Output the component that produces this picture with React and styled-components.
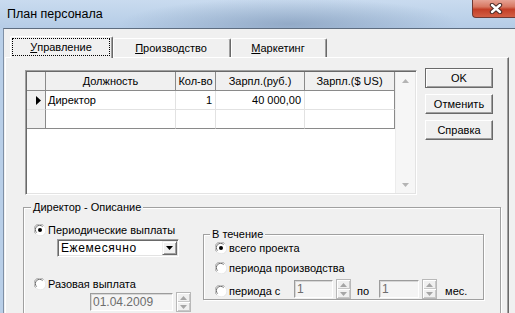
import React from 'react';
import styled, { createGlobalStyle } from 'styled-components';

const tabs = [
	{ key: 'mgmt', first: 'У', rest: 'правление', width: 103, active: true },
	{ key: 'prod', first: 'П', rest: 'роизводство', width: 118 },
	{ key: 'mkt', first: 'М', rest: 'аркетинг', width: 96 },
];

const columns = [
	{ key: 'ind', width: 19, title: '' },
	{ key: 'pos', width: 130, title: 'Должность', align: 'left' },
	{ key: 'qty', width: 40, title: 'Кол-во', align: 'right' },
	{ key: 'rub', width: 89, title: 'Зарпл.(руб.)', align: 'right' },
	{ key: 'usd', width: 90, title: 'Зарпл.($ US)', align: 'right' },
];

const rows = [
	{ pos: 'Директор', qty: '1', rub: '40 000,00', usd: '', current: true },
	{ pos: '', qty: '', rub: '', usd: '' },
];

const RadioGlyph = ({ checked }) => (
	<svg width='12' height='12' viewBox='0 0 12 12'>
		<circle cx='6' cy='6' r='5.5' fill='#fff' />
		<path d='M1.6 9.6 A5.2 5.2 0 0 1 9.6 1.6' stroke='#a0a0a0' fill='none' />
		<path d='M2.6 8.6 A4.1 4.1 0 0 1 8.6 2.6' stroke='#6e6e6e' fill='none' />
		<path d='M2.4 10.4 A5.2 5.2 0 0 0 10.4 2.4' stroke='#e6e6e6' fill='none' />
		{checked && <circle cx='6' cy='6' r='2' fill='#000' />}
	</svg>
);

const Arrow = ({ dir, color }) => (
	<svg width='7' height='4' viewBox='0 0 7 4'>
		{dir === 'up' ? <path d='M0 4 L3.5 0 L7 4 Z' fill={color} /> : <path d='M0 0 L7 0 L3.5 4 Z' fill={color} />}
	</svg>
);

const Spin = () => (
	<Spinner>
		<SpinHalf>
			<Arrow dir='up' color='#a6a6a6' />
		</SpinHalf>
		<SpinHalf>
			<Arrow dir='down' color='#a6a6a6' />
		</SpinHalf>
	</Spinner>
);

const App = () => {
	return (
		<>
			<GlobalStyle />
			<Window>
				<TitleBar>
					<Title>План персонала</Title>
					<CloseButton>
						<svg width='14' height='11' viewBox='0 0 14 11'>
							<path d='M3 2 L11 9 M11 2 L3 9' stroke='#4b2b27' strokeWidth='4.4' strokeLinecap='round' />
							<path d='M3 2 L11 9 M11 2 L3 9' stroke='#fff' strokeWidth='2.4' strokeLinecap='round' />
						</svg>
					</CloseButton>
				</TitleBar>
				<Client>
					<TabList>
						{tabs.map((tab) => (
							<Tab key={tab.key} $active={tab.active} style={{ width: tab.width }}>
								<TabLabel $active={tab.active}>
									<u>{tab.first}</u>
									{tab.rest}
								</TabLabel>
							</Tab>
						))}
					</TabList>
					<Page>
						<TopRow>
							<Grid>
								<Table>
									<Row>
										{columns.map((col) => (
											<HeadCell key={col.key} $w={col.width}>
												{col.title}
											</HeadCell>
										))}
									</Row>
									{rows.map((row, i) => (
										<Row key={i}>
											{columns.map((col) =>
												col.key === 'ind' ? (
													<IndCell key={col.key} $w={col.width} $last={i === rows.length - 1}>
														{row.current && (
															<svg width='5' height='9' viewBox='0 0 5 9'>
																<path d='M0 0 L5 4.5 L0 9 Z' fill='#000' />
															</svg>
														)}
													</IndCell>
												) : (
													<Cell
														key={col.key}
														$w={col.width}
														$align={col.align}
														$edge={col.key === 'usd'}
														$last={i === rows.length - 1}
													>
														{row[col.key]}
													</Cell>
												)
											)}
										</Row>
									))}
								</Table>
								<ScrollBar>
									<ScrollArrow>
										<Arrow dir='up' color='#b4b4b4' />
									</ScrollArrow>
									<ScrollArrow>
										<Arrow dir='down' color='#b4b4b4' />
									</ScrollArrow>
								</ScrollBar>
							</Grid>
							<Buttons>
								<Button $default>OK</Button>
								<Button>Отменить</Button>
								<Button>Справка</Button>
							</Buttons>
						</TopRow>
						<GroupBox>
							<Legend>Директор - Описание</Legend>
							<GroupBody>
								<LeftCol>
									<RadioRow>
										<RadioGlyph checked />
										<span>Периодические выплаты</span>
									</RadioRow>
									<Combo>
										<ComboText>Ежемесячно</ComboText>
										<ComboButton>
											<Arrow dir='down' color='#000' />
										</ComboButton>
									</Combo>
									<RadioRow $gap={20}>
										<RadioGlyph />
										<span>Разовая выплата</span>
									</RadioRow>
									<DateRow>
										<Edit $w={83}>01.04.2009</Edit>
										<Spin />
									</DateRow>
								</LeftCol>
								<InnerGroup>
									<Legend $inner>В течение</Legend>
									<InnerBody>
										<RadioRow>
											<RadioGlyph checked />
											<span>всего проекта</span>
										</RadioRow>
										<RadioRow $gap={6}>
											<RadioGlyph />
											<span>периода производства</span>
										</RadioRow>
										<PeriodRow>
											<PeriodLabel>
												<RadioGlyph />
												<span>периода с</span>
											</PeriodLabel>
											<Edit $w={39} $h={18}>1</Edit>
											<Spin />
											<Word $l={6} $r={10}>по</Word>
											<Edit $w={40} $h={18}>1</Edit>
											<Spin />
											<Word $l={8}>мес.</Word>
										</PeriodRow>
									</InnerBody>
								</InnerGroup>
							</GroupBody>
						</GroupBox>
					</Page>
				</Client>
			</Window>
		</>
	);
};

const GlobalStyle = createGlobalStyle`
	html, body {
		margin: 0;
		padding: 0;
		background: #f0f0f0;
	}
	body {
		font-family: "Liberation Sans", Arial, sans-serif;
		font-size: 11px;
		color: #000;
	}
`;

const Window = styled.div`
	width: 515px;
	height: 313px;
	overflow: hidden;
	display: flex;
	flex-direction: column;
	background: #b9cfe8;
`;

const TitleBar = styled.div`
	height: 28px;
	flex-shrink: 0;
	display: flex;
	align-items: flex-start;
	background: radial-gradient(ellipse 170px 26px at 290px 24px, rgba(110, 135, 168, 0.5), rgba(110, 135, 168, 0)),
		linear-gradient(#c9dbef, #b5cce6);
`;

const Title = styled.div`
	padding: 8px 0 0 7px;
	font-size: 12.5px;
	line-height: 13px;
	color: #000;
`;

const CloseButton = styled.div`
	margin-left: auto;
	width: 43px;
	height: 18px;
	box-sizing: border-box;
	display: flex;
	align-items: center;
	justify-content: center;
	padding-left: 4px;
	border-left: 1px solid #6f3a34;
	border-bottom: 1px solid #6f3a34;
	border-radius: 0 0 0 4px;
	background: linear-gradient(#e6a394 0%, #d77761 40%, #c33f27 55%, #d35f45 100%);
`;

const Client = styled.div`
	flex: 1;
	display: flex;
	flex-direction: column;
	margin-left: 3px;
	border-left: 1px solid #7f90a6;
	border-top: 1px solid #5e6d80;
	background: #f0f0f0;
	padding: 7px 0 0 1px;
	min-height: 0;
`;

const TabList = styled.div`
	height: 21px;
	display: flex;
	align-items: flex-end;
	padding-left: 5px;
	position: relative;
	z-index: 1;
`;

const Tab = styled.div`
	box-sizing: border-box;
	height: ${(p) => (p.$active ? 22 : 19)}px;
	margin-bottom: ${(p) => (p.$active ? -1 : 0)}px;
	display: flex;
	background: #f0f0f0;
	border-top: 1px solid #fff;
	border-left: 1px solid #fff;
	border-right: 1px solid #696969;
	border-radius: 2px 2px 0 0;
	box-shadow: inset -1px 0 #a0a0a0;
	padding: ${(p) => (p.$active ? '1px 2px 2px 1px' : '0 2px 0 0')};
`;

const TabLabel = styled.div`
	flex: 1;
	display: flex;
	align-items: center;
	justify-content: center;
	border: 1px dotted ${(p) => (p.$active ? '#000' : 'transparent')};
	line-height: 13px;
	u {
		text-decoration: underline;
		text-underline-offset: 1px;
	}
`;

const Page = styled.div`
	box-sizing: border-box;
	width: 504px;
	flex: 1;
	border-top: 1px solid #fff;
	border-left: 1px solid #fff;
	border-right: 1px solid #696969;
	box-shadow: inset -1px 0 #a0a0a0;
	padding: 12px 7px 0 17px;
`;

const TopRow = styled.div`
	display: flex;
	align-items: flex-start;
	padding-left: 2px;
`;

const Grid = styled.div`
	box-sizing: border-box;
	width: 392px;
	height: 125px;
	display: flex;
	border-top: 1px solid #a0a0a0;
	border-left: 1px solid #a0a0a0;
	border-right: 1px solid #fff;
	border-bottom: 1px solid #fff;
	box-shadow: inset 1px 1px #696969, inset -1px -1px #e3e3e3;
	padding: 1px;
`;

const Table = styled.div`
	width: 368px;
	background: #fff;
	display: flex;
	flex-direction: column;
`;

const Row = styled.div`
	display: flex;
	height: 19px;
`;

const HeadCell = styled.div`
	box-sizing: border-box;
	width: ${(p) => p.$w}px;
	background: #f0f0f0;
	border-right: 1px solid #8a8a8a;
	border-bottom: 1px solid #8a8a8a;
	display: flex;
	align-items: center;
	justify-content: center;
	white-space: nowrap;
	overflow: hidden;
`;

const IndCell = styled.div`
	box-sizing: border-box;
	width: ${(p) => p.$w}px;
	background: #f0f0f0;
	border-right: 1px solid #8a8a8a;
	border-bottom: 1px solid ${(p) => (p.$last ? '#8a8a8a' : '#e2e2e2')};
	display: flex;
	align-items: center;
	padding-left: 9px;
`;

const Cell = styled.div`
	box-sizing: border-box;
	width: ${(p) => p.$w}px;
	border-right: 1px solid ${(p) => (p.$edge ? '#8a8a8a' : '#e2e2e2')};
	border-bottom: 1px solid ${(p) => (p.$last ? '#8a8a8a' : '#e2e2e2')};
	display: flex;
	align-items: center;
	justify-content: ${(p) => (p.$align === 'right' ? 'flex-end' : 'flex-start')};
	padding: 0 3px 0 2px;
	white-space: nowrap;
`;

const ScrollBar = styled.div`
	flex: 1;
	background: #f6f6f6;
	border-left: 1px solid #ececec;
	display: flex;
	flex-direction: column;
	justify-content: space-between;
`;

const ScrollArrow = styled.div`
	height: 17px;
	display: flex;
	align-items: center;
	justify-content: center;
`;

const Buttons = styled.div`
	display: flex;
	flex-direction: column;
	gap: 6px;
	margin: -2px 0 0 8px;
`;

const Button = styled.button`
	box-sizing: border-box;
	width: 68px;
	height: 20px;
	padding: 0;
	font: inherit;
	color: #000;
	background: #f0f0f0;
	border: 1px solid;
	border-color: ${(p) => (p.$default ? '#6a6a6a' : '#fff #696969 #696969 #fff')};
	box-shadow: ${(p) =>
		p.$default ? 'inset 1px 1px #fff, inset -1px -1px #a0a0a0' : 'inset -1px -1px #a0a0a0'};
`;

const GroupBox = styled.fieldset`
	margin: 6px 0 0;
	padding: 0;
	min-width: 0;
	height: 130px;
	border: 1px solid #a0a0a0;
	box-shadow: inset 1px 1px #fff, 1px 1px #fff;
`;

const Legend = styled.legend`
	margin-left: ${(p) => (p.$inner ? 6 : 7)}px;
	padding: 0 2px;
	line-height: 13px;
	background: #f0f0f0;
`;

const GroupBody = styled.div`
	display: flex;
	align-items: flex-start;
	padding: 9px 0 0 10px;
`;

const LeftCol = styled.div`
	width: 169px;
	display: flex;
	flex-direction: column;
`;

const RadioRow = styled.div`
	display: flex;
	align-items: center;
	gap: 2px;
	height: 14px;
	margin-top: ${(p) => p.$gap || 0}px;
	white-space: nowrap;
`;

const Combo = styled.div`
	box-sizing: border-box;
	width: 122px;
	height: 18px;
	margin: 2px 0 0 23px;
	display: flex;
	background: #fff;
	border-top: 1px solid #a0a0a0;
	border-left: 1px solid #a0a0a0;
	border-right: 1px solid #fff;
	border-bottom: 1px solid #fff;
	box-shadow: inset 1px 1px #696969, inset -1px -1px #e3e3e3;
	padding: 1px;
`;

const ComboText = styled.div`
	flex: 1;
	display: flex;
	align-items: center;
	padding-left: 2px;
	font-size: 12px;
	letter-spacing: 0.6px;
`;

const ComboButton = styled.div`
	box-sizing: border-box;
	width: 15px;
	display: flex;
	align-items: center;
	justify-content: center;
	background: #f0f0f0;
	border: 1px solid;
	border-color: #f0f0f0 #696969 #696969 #f0f0f0;
	box-shadow: inset 1px 1px #fff, inset -1px -1px #a0a0a0;
`;

const DateRow = styled.div`
	display: flex;
	align-items: center;
	margin: 1px 0 0 56px;
`;

const Edit = styled.div`
	box-sizing: border-box;
	width: ${(p) => p.$w}px;
	height: ${(p) => p.$h || 18}px;
	display: flex;
	align-items: center;
	padding-left: 2px;
	font-size: 12px;
	color: #6d6d6d;
	background: #f4f4f4;
	border-top: 1px solid #9c9c9c;
	border-left: 1px solid #9c9c9c;
	border-right: 1px solid #fff;
	border-bottom: 1px solid #fff;
	box-shadow: inset 1px 1px #d6d6d6;
`;

const Spinner = styled.div`
	box-sizing: border-box;
	width: 15px;
	height: 20px;
	margin-left: 3px;
	display: flex;
	flex-direction: column;
	border: 1px solid #b8b8b8;
`;

const SpinHalf = styled.div`
	flex: 1;
	display: flex;
	align-items: center;
	justify-content: center;
	background: #f0f0f0;
	box-shadow: inset 1px 1px #fff, inset -1px -1px #c8c8c8;
`;

const InnerGroup = styled.fieldset`
	box-sizing: border-box;
	margin: 5px 0 0;
	padding: 0;
	min-width: 0;
	width: 281px;
	height: 72px;
	border: 1px solid #a0a0a0;
	box-shadow: inset 1px 1px #fff, 1px 1px #fff;
`;

const InnerBody = styled.div`
	padding-left: 11px;
	display: flex;
	flex-direction: column;
`;

const PeriodRow = styled.div`
	display: flex;
	align-items: center;
	height: 20px;
	margin-top: 4px;
`;

const PeriodLabel = styled.div`
	width: 79px;
	display: flex;
	align-items: center;
	gap: 2px;
	padding-top: 3px;
	white-space: nowrap;
`;

const Word = styled.span`
	margin: 3px ${(p) => p.$r || 0}px 0 ${(p) => p.$l || 0}px;
`;

export default App;
